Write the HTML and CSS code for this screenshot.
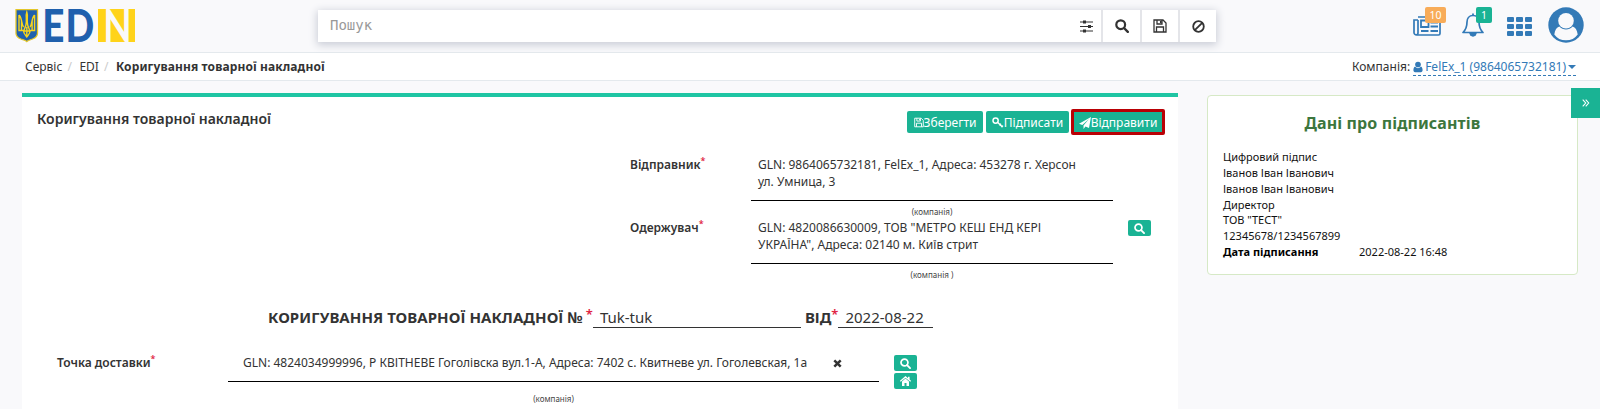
FILE: index.html
```html
<!DOCTYPE html>
<html lang="uk">
<head>
<meta charset="utf-8">
<title>EDIN</title>
<link rel="stylesheet" href="styles.css">
</head>
<body>
<svg class="defs" width="0" height="0">
  <symbol id="search" viewBox="0 0 14 14"><circle cx="5.7" cy="5.7" r="4.4" fill="none" stroke="currentColor" stroke-width="2.2"/><path d="M9 9l3.8 3.8" stroke="currentColor" stroke-width="2.4" stroke-linecap="round"/></symbol>
  <symbol id="save" viewBox="0 0 14 14"><path d="M1 1h9l3 3v9H1zM3.5 13V8h7v5M4 1v4h5V1M7.6 2v2" fill="none" stroke="currentColor" stroke-width="1.3"/></symbol>
  <symbol id="user" viewBox="0 0 12 14"><circle cx="6" cy="4" r="3.4" fill="currentColor"/><path d="M2.6 6.5C1 7 .5 9 .5 11c0 1.400.8 2.200 2 2.200h7c1.200 0 2-.8 2-2.200 0-2-.5-4-2.100-4.500C8.500 8 7 8.400 6 8.400S3.500 8 2.600 6.500z" fill="currentColor"/></symbol>
</svg>
<header class="topbar">
  <a class="logo">
    <svg width="140" height="52" viewBox="0 0 140 52">
      <path d="M16 9.700h21.500v23.600c0 3-2 4.600-5 5.700-3 1-4.700 1.500-5.700 2.500-1-1-2.800-1.500-5.800-2.500-3-1.100-5-2.700-5-5.700z" fill="#1f60ad" stroke="#e3c62a" stroke-width="1.300"/>
      <path d="M26.800 12c-1.500 4 .5 9-1 13.500-.7 2.500-1.800 3.500-1.800 5.500h5.600c0-2-1.100-3-1.800-5.500-1.500-4.500.5-9.500-1-13.500zM19 15v15.500h4.500M19 15c3.300 3 2 9 4.600 12M34.600 15v15.500h-4.500M34.600 15c-3.300 3-2 9-4.600 12M23.600 31c0 3 2 4 3.200 6 1.200-2 3.200-3 3.200-6M26.800 27v9M21.500 20v10M32.100 20v10" fill="none" stroke="#f9d51c" stroke-width="1.400"/>
      <rect x="98" y="9" width="37" height="33" fill="#ffd31a"/>
      <g class="logo-text">
        <text class="blue" transform="translate(42.300 42) scale(.84 1)">E</text>
        <text class="blue" transform="translate(65.500 42) scale(.82 1)">D</text>
        <text class="negative" transform="translate(103.300 42) scale(.8 1)">N</text>
      </g>
    </svg>
  </a>
  <div class="search">
    <span class="placeholder">Пошук</span>
    <span class="sbtn filter"><svg width="13" height="13" viewBox="0 0 13 13"><path d="M0 2h13M0 6.500h13M0 11h13" stroke="currentColor" stroke-width="1.100"/><path d="M3 .5h3v3H3zM8 5h3v3H8zM3 9.500h3v3H3z" fill="currentColor"/></svg></span>
    <span class="sbtn"><svg width="14" height="14"><use href="#search"/></svg></span>
    <span class="sbtn"><svg width="14" height="14"><use href="#save"/></svg></span>
    <span class="sbtn last"><svg width="13" height="13" viewBox="0 0 13 13"><circle cx="6.500" cy="6.500" r="5.300" fill="none" stroke="currentColor" stroke-width="1.800"/><path d="M2.800 10.200l7.400-7.400" stroke="currentColor" stroke-width="1.800"/></svg></span>
  </div>
  <nav class="tools">
    <span class="tool news"><svg width="28" height="20" viewBox="0 0 28 20"><path d="M5 1h22v16.500a1.500 1.500 0 0 1-1.500 1.500h-22A2.500 2.500 0 0 1 1 16.500V4h4M5 4v12.500A2.200 2.200 0 0 1 3 19" fill="none" stroke="currentColor" stroke-width="1.700"/><path d="M8 4.500h7.500V11H8zM17.500 6.500H25M17.500 10.500H25M8 15h7.500M17.500 15H25" fill="none" stroke="currentColor" stroke-width="1.800"/></svg><b class="badge orange">10</b></span>
    <span class="tool bell"><svg width="22" height="24" viewBox="0 0 22 24"><path d="M11 2.500c-4 0-6 3-6 6.500 0 5-1.500 8-4 10.500h20c-2.500-2.500-4-5.500-4-10.500 0-3.500-2-6.500-6-6.500z" fill="none" stroke="currentColor" stroke-width="1.700" stroke-linejoin="round"/><path d="M11 .5v2" stroke="currentColor" stroke-width="1.800"/><path d="M7.800 20a3.200 3.200 0 0 0 6.400 0z" fill="currentColor" stroke="currentColor"/></svg><b class="badge green">1</b></span>
    <svg class="grid-icon" width="25" height="19" viewBox="0 0 25 19" fill="currentColor"><rect width="7" height="5" rx="1"/><rect x="9" width="7" height="5" rx="1"/><rect x="18" width="7" height="5" rx="1"/><rect y="7" width="7" height="5" rx="1"/><rect x="9" y="7" width="7" height="5" rx="1"/><rect x="18" y="7" width="7" height="5" rx="1"/><rect y="14" width="7" height="5" rx="1"/><rect x="9" y="14" width="7" height="5" rx="1"/><rect x="18" y="14" width="7" height="5" rx="1"/></svg>
    <svg class="avatar" width="36" height="36" viewBox="0 0 36 36"><circle cx="18" cy="18" r="17.700" fill="currentColor"/><circle cx="18" cy="13.800" r="7.800" fill="#f9f9fb"/><path d="M6.300 27.500c.6-4.500 2.400-7.300 5-8 1.800 2 4.200 3 6.700 3s4.900-1 6.700-3c2.600.7 4.400 3.500 5 8C27 31.500 23 33.300 18 33.300S9 31.500 6.300 27.500z" fill="#f9f9fb"/></svg>
  </nav>
</header>
<div class="crumbs">
  <div class="path"><span>Сервіс</span><i>/</i><span>EDI</span><i>/</i><b>Коригування товарної накладної</b></div>
  <div class="company"><span>Компанія:</span><a><svg width="10" height="12"><use href="#user"/></svg><span>FelEx_1 (9864065732181)</span><em></em></a></div>
</div>
<main class="page">
  <section class="card">
    <div class="card-head">
      <h5>Коригування товарної накладної</h5>
      <div class="actions">
        <button class="btn save"><svg width="10" height="11"><use href="#save"/></svg>Зберегти</button>
        <button class="btn sign"><svg width="12" height="11" viewBox="0 0 12 11"><circle cx="3.600" cy="3.600" r="2.600" fill="none" stroke="currentColor" stroke-width="1.500"/><path d="M5.500 5.300l5 4.700M7.500 8.500l1.500-1.700M9.500 10.300l1.500-1.700" stroke="currentColor" stroke-width="1.400"/></svg>Підписати</button>
        <button class="btn send"><svg width="12" height="12" viewBox="0 0 12 12"><path d="M12 0l-2 11-3.500-1.500L4.500 12V8.500L10 2 3.300 8 0 6.800z" fill="currentColor"/></svg>Відправити</button>
      </div>
    </div>
    <div class="row party">
      <label>Відправник<sup>*</sup></label>
      <div class="field"><p>GLN: 9864065732181, FelEx_1, Адреса: 453278 г. Херсон<br>ул. Умница, 3</p><small>(компанія)</small></div>
    </div>
    <div class="row party second">
      <label>Одержувач<sup>*</sup></label>
      <div class="field"><p>GLN: 4820086630009, ТОВ "МЕТРО КЕШ ЕНД КЕРІ<br>УКРАЇНА", Адреса: 02140 м. Київ стрит</p><small>(компанія )</small></div>
      <span class="mini"><svg width="11" height="11"><use href="#search"/></svg></span>
    </div>
    <div class="doc">
      <b class="doc-title">КОРИГУВАННЯ ТОВАРНОЇ НАКЛАДНОЇ №</b><sup>*</sup><span class="input number">Tuk-tuk</span><b class="from">ВІД</b><sup class="s2">*</sup><span class="input date">2022-08-22</span>
    </div>
    <div class="row delivery">
      <label>Точка доставки<sup>*</sup></label>
      <div class="field"><p><span>GLN: 4824034999996, Р КВІТНЕВЕ Гоголівска вул.1-А, Адреса: 7402 с. Квитневе ул. Гоголевская, 1а</span><svg width="9" height="9" viewBox="0 0 9 9"><path d="M1.300 1.300l6.400 6.400M7.700 1.300L1.300 7.700" stroke="currentColor" stroke-width="2.500"/></svg></p><small>(компанія)</small></div>
      <div class="minis"><span class="mini"><svg width="11" height="11"><use href="#search"/></svg></span><span class="mini"><svg width="11" height="10" viewBox="0 0 11 10"><path d="M.3 5.300L5.500.9l5.200 4.400" fill="none" stroke="currentColor" stroke-width="1.300"/><path d="M8 .8h1.600v3H8zM2 5.600l3.500-3 3.500 3V10H6.500V7h-2v3H2z" fill="currentColor"/></svg></span></div>
    </div>
  </section>
  <aside class="signers">
    <h3>Дані про підписантів</h3>
    <p>Цифровий підпис</p><p>Іванов Іван Іванович</p><p>Іванов Іван Іванович</p><p class="short">Директор</p><p>ТОВ "ТЕСТ"</p><p>12345678/1234567899</p>
    <p class="signed"><b>Дата підписання</b><span>2022-08-22 16:48</span></p>
    <span class="toggle"><svg width="8" height="8" viewBox="0 0 8 8"><path d="M.7.700L3.700 4l-3 3.300M3.700.700l3 3.300-3 3.300" fill="none" stroke="currentColor" stroke-width="1.100"/></svg></span>
  </aside>
</main>
</body>
</html>
```
FILE: styles.css
```css
* { box-sizing: border-box; }
body { margin: 0; height: 409px; overflow: hidden; background: #f9f9fb; color: #333; font: 12px/17px "Noto Sans", sans-serif; display: flex; flex-direction: column; }
.defs { position: absolute; }
p, h3, h5 { margin: 0; }
svg { display: block; flex: none; }
.topbar { height: 53px; flex: none; border-bottom: 1px solid #e4e9ed; display: flex; align-items: flex-start; }
.logo { width: 318px; }
.logo svg { overflow: visible; }
.logo-text { font: 900 46px Lato, sans-serif; }
.blue { fill: #1f60ad; }
.negative { fill: #f9f9fb; font-weight: 700; }
.search { margin-top: 10px; width: 898px; height: 32px; background: #fff; box-shadow: 0 2px 8px 1px #c9ccd6; display: flex; align-items: stretch; }
.placeholder { flex: 1; padding: 7px 12px; font-family: "DejaVu Sans Mono", monospace; font-size: 14px; color: #999; }
.sbtn { width: 39px; border-left: 2px solid #e4e5e9; display: flex; align-items: center; justify-content: center; color: #333; }
.sbtn:nth-child(4) { width: 38px; }
.filter { width: 30px; border-left: 0; }
.last { width: 38px; }
.tools { flex: 1; display: flex; color: #337ab7; }
.tool { position: relative; }
.news { margin: 16px 0 0 197px; width: 49px; }
.bell { margin-top: 13px; width: 45px; }
.grid-icon { margin-top: 17px; }
.avatar { margin: 7px 0 0 16px; }
.badge { position: absolute; height: 16px; border-radius: 2px; color: #fff; font: 10.500px/16px "Noto Sans", sans-serif; text-align: center; }
.orange { left: 12px; top: -9px; width: 21px; background: #f8ac59; }
.green { left: 14px; top: -6px; width: 16px; background: #1ab394; }
.crumbs { height: 28px; flex: none; background: #fff; border-bottom: 1px solid #e4e9ed; display: flex; justify-content: space-between; padding: 5px 24px 0 25px; }
.path { display: flex; }
.path i { font-style: normal; color: #ccc; width: 17px; padding-left: 5px; }
.path b { letter-spacing: .12px; }
.company { display: flex; gap: 3px; }
.company a { display: flex; height: 18px; color: #337ab7; border-bottom: 1px dashed #337ab7; }
.company svg { margin: 3px 2px 0 0; }
.company em { border: 4px solid transparent; border-top-color: #337ab7; border-bottom: 0; margin: 7px 0 0 2px; height: 4px; }
.page { flex: 1; display: flex; align-items: flex-start; padding: 12px 22px 0; gap: 29px; }
.card { width: 1156px; height: 316px; background: #fff; border-top: 4px solid #1fc5a3; }
.card-head { display: flex; justify-content: space-between; padding: 11px 13px 0 15px; height: 59px; }
h5 { font: 600 14px/22px "Noto Sans", sans-serif; letter-spacing: .02px; }
.actions { display: flex; align-items: flex-start; gap: 3px; }
.btn { height: 22px; margin-top: 3px; background: #1ab394; color: #fff; border: 0; border-radius: 2px; padding: 1px 0 0; font: 12px/21px "Noto Sans", sans-serif; display: flex; align-items: center; justify-content: center; gap: 0; }
.save { width: 76px; }
.sign { width: 83px; }
.send { width: 94px; height: 26px; margin: 1px 0 0 -1px; border: 3px solid #b90005; }
.row { display: flex; }
label { font-weight: 600; }
sup { color: #e02442; font-size: 9px; line-height: 0; vertical-align: 5px; }
.party { padding-left: 608px; height: 63px; }
.party label { width: 121px; }
.party .field { width: 362px; }
.field p { border-bottom: 1px solid #000; padding: 0 7px; height: 45px; }
.field small { display: block; text-align: center; font-size: 8px; line-height: 10px; margin-top: 6px; color: #444; }
.mini { width: 23px; height: 16px; border-radius: 2px; background: #1ab394; color: #fff; display: flex; align-items: center; justify-content: center; }
.party .mini { margin: 1px 0 0 15px; }
.doc { display: flex; align-items: flex-start; height: 46px; margin-top: 26px; padding-left: 246px; font-size: 15px; line-height: 18px; }
.doc-title { letter-spacing: .05px; }
.doc sup { font-size: 13px; font-weight: 600; line-height: 12px; margin-left: 3px; }
.doc .s2 { margin-left: 0; }
.input { border-bottom: 1px solid #333; height: 20px; padding-left: 7px; }
.number { width: 208px; margin-right: 4px; }
.date { width: 95px; }
.delivery { padding-left: 35px; }
.delivery label { width: 171px; }
.delivery .field { width: 651px; }
.delivery .field p { display: flex; gap: 26px; padding-left: 15px; height: 28px; }
.delivery .field p svg { margin-top: 5px; }
.delivery .field small { margin-top: 12px; }
.minis { display: grid; gap: 2px; margin: 1px 0 0 15px; align-content: start; }
.signers { position: relative; width: 371px; height: 180px; margin-top: 2px; background: #fff; border: 1px solid #d6e9c6; border-radius: 4px; padding: 15px; font-size: 11px; line-height: 16px; color: #111; }
h3 { font: 700 16px/24px "Noto Sans", sans-serif; letter-spacing: .1px; color: #3c763d; text-align: center; margin-bottom: 14px; }
.signers .short { height: 15px; }
.signed { display: flex; }
.signed b { width: 136px; color: #000; }
.toggle { position: absolute; right: -23px; top: -8px; width: 29px; height: 30px; background: #1ab394; color: #fff; display: flex; align-items: center; justify-content: center; }
```
